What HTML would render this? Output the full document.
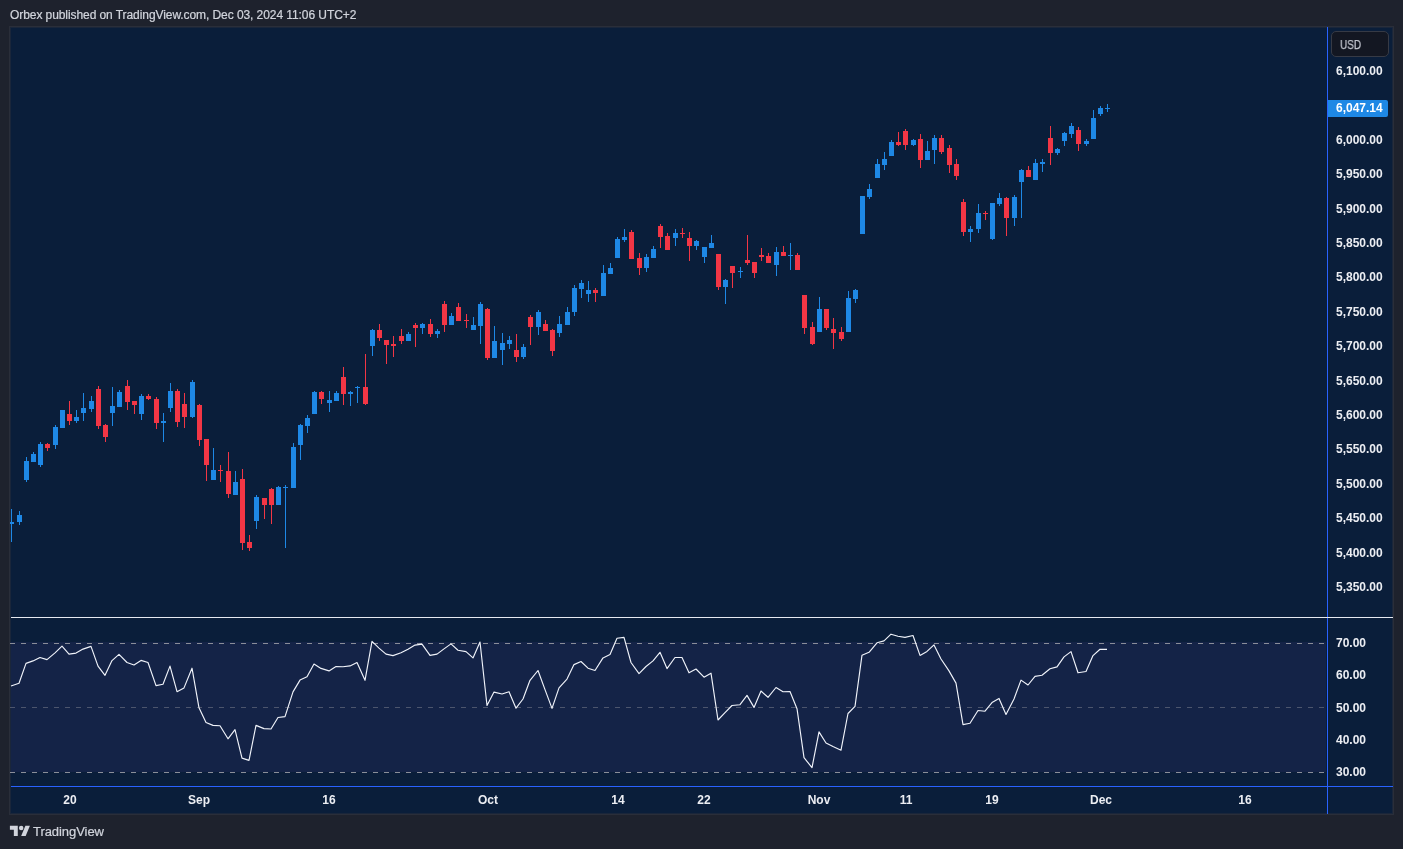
<!DOCTYPE html>
<html lang="en"><head><meta charset="utf-8"><title>Orbex published on TradingView.com</title>
<style>
html,body{margin:0;padding:0}
body{width:1403px;height:849px;overflow:hidden;background:#1e222d;position:relative;font-family:"Liberation Sans",sans-serif;}
.hdr{position:absolute;left:10px;top:7px;font-size:12px;line-height:16px;color:#d1d4dc;white-space:nowrap;letter-spacing:-0.075px}
.frame{position:absolute;left:9px;top:26px;width:1383px;height:787px;border:1px solid #2a2e39;background:#0a1e3a;}
.frame2{position:absolute;left:10px;top:27px;width:1381px;height:785px;border:1px solid #1a263a;}
svg{position:absolute;left:0;top:0}
.hdr,.pl,.tl,.usd span,.cur span,.logo{will-change:transform}
.hdr,.logo{-webkit-text-stroke:0.22px #d1d4dc}
.usd span{-webkit-text-stroke:0.25px #c1c4cd}
.pl{position:absolute;left:1336px;font-size:12px;line-height:16px;font-weight:bold;color:#eceef3;white-space:nowrap}
.tl{position:absolute;top:792px;width:60px;text-align:center;font-size:12px;line-height:16px;font-weight:bold;color:#eceef3;white-space:nowrap}
.usd{position:absolute;left:1331px;top:31px;width:56px;height:24px;border:1px solid #363a45;border-radius:5px;background:#131722;color:#c1c4cd;font-size:12px;line-height:24px;box-sizing:content-box}
.usd span{position:absolute;left:8px;top:1px;transform:scaleX(0.83);transform-origin:0 50%}
.cur{position:absolute;left:1328px;top:100px;width:60px;height:17px;background:#1e88e5;border-radius:0 2px 2px 0;color:#fff;font-size:12px;font-weight:bold;line-height:17px;}
.cur span{position:absolute;left:8px;top:0}
.logo{position:absolute;left:33px;top:824px;font-size:13px;line-height:16px;color:#d1d4dc;white-space:nowrap;letter-spacing:-0.06px}
</style></head><body>
<div class="hdr">Orbex published on TradingView.com, Dec 03, 2024 11:06 UTC+2</div>
<div class="frame"></div><div class="frame2"></div>
<svg width="1403" height="849" viewBox="0 0 1403 849" shape-rendering="crispEdges">
<defs><clipPath id="cp"><rect x="10" y="28" width="1317" height="760"/></clipPath></defs>
<rect x="11" y="642" width="1315" height="130" fill="#142347"/>
<g clip-path="url(#cp)">
<path fill="#1e88e5" d="M11 509h1v33h-1zM9 522h5v2h-5zM19 511h1v14h-1zM17 515h5v7h-5zM26 457h1v25h-1zM24 461h5v19h-5zM33 452h1v10h-1zM31 454h5v8h-5zM40 442h1v25h-1zM38 444h5v21h-5zM55 425h1v24h-1zM53 427h5v18h-5zM62 410h1v18h-1zM60 410h5v18h-5zM76 410h1v13h-1zM74 417h5v4h-5zM83 393h1v28h-1zM81 408h5v5h-5zM91 396h1v16h-1zM89 401h5v8h-5zM112 387h1v39h-1zM110 406h5v7h-5zM119 390h1v17h-1zM117 392h5v15h-5zM141 394h1v26h-1zM139 396h5v18h-5zM163 413h1v29h-1zM161 421h5v2h-5zM170 383h1v29h-1zM168 391h5v17h-5zM192 380h1v38h-1zM190 382h5v35h-5zM213 448h1v32h-1zM211 470h5v10h-5zM235 471h1v24h-1zM233 482h5v13h-5zM256 495h1v34h-1zM254 497h5v24h-5zM278 486h1v19h-1zM276 487h5v18h-5zM285 485h1v63h-1zM283 487h5v1h-5zM293 443h1v45h-1zM291 447h5v41h-5zM300 424h1v36h-1zM298 425h5v20h-5zM307 415h1v18h-1zM305 418h5v8h-5zM314 391h1v23h-1zM312 392h5v22h-5zM329 391h1v21h-1zM327 400h5v3h-5zM336 391h1v10h-1zM334 393h5v8h-5zM350 391h1v15h-1zM348 392h5v2h-5zM357 386h1v17h-1zM355 387h5v1h-5zM372 329h1v27h-1zM370 330h5v16h-5zM408 332h1v9h-1zM406 334h5v7h-5zM422 323h1v11h-1zM420 324h5v4h-5zM437 329h1v9h-1zM435 331h5v3h-5zM451 313h1v12h-1zM449 316h5v9h-5zM473 317h1v13h-1zM471 325h5v5h-5zM480 302h1v42h-1zM478 304h5v22h-5zM494 326h1v32h-1zM492 341h5v17h-5zM502 333h1v32h-1zM500 343h5v7h-5zM509 336h1v13h-1zM507 340h5v4h-5zM523 344h1v15h-1zM521 347h5v10h-5zM538 310h1v25h-1zM536 312h5v15h-5zM559 316h1v21h-1zM557 324h5v9h-5zM567 307h1v18h-1zM565 312h5v13h-5zM574 285h1v31h-1zM572 288h5v24h-5zM581 280h1v18h-1zM579 283h5v6h-5zM588 281h1v21h-1zM586 290h5v4h-5zM603 265h1v31h-1zM601 273h5v23h-5zM610 263h1v11h-1zM608 268h5v6h-5zM617 237h1v21h-1zM615 239h5v19h-5zM624 229h1v13h-1zM622 237h5v3h-5zM646 254h1v18h-1zM644 257h5v11h-5zM653 246h1v12h-1zM651 249h5v9h-5zM675 229h1v17h-1zM673 233h5v5h-5zM696 240h1v10h-1zM694 241h5v5h-5zM704 247h1v16h-1zM702 247h5v10h-5zM711 235h1v13h-1zM709 243h5v5h-5zM725 279h1v25h-1zM723 280h5v7h-5zM740 267h1v11h-1zM738 271h5v1h-5zM776 247h1v29h-1zM774 252h5v13h-5zM790 243h1v27h-1zM788 255h5v1h-5zM819 297h1v35h-1zM817 309h5v23h-5zM848 291h1v41h-1zM846 298h5v34h-5zM855 289h1v14h-1zM853 290h5v9h-5zM862 196h1v38h-1zM860 196h5v38h-5zM869 184h1v15h-1zM867 189h5v8h-5zM877 159h1v19h-1zM875 164h5v14h-5zM884 152h1v18h-1zM882 159h5v6h-5zM891 140h1v16h-1zM889 142h5v14h-5zM913 139h1v7h-1zM911 140h5v5h-5zM927 141h1v19h-1zM925 151h5v9h-5zM934 135h1v29h-1zM932 138h5v12h-5zM970 226h1v16h-1zM968 229h5v3h-5zM978 204h1v29h-1zM976 213h5v16h-5zM992 203h1v37h-1zM990 203h5v36h-5zM999 193h1v13h-1zM997 198h5v6h-5zM1014 195h1v31h-1zM1012 197h5v21h-5zM1021 169h1v49h-1zM1019 170h5v12h-5zM1035 159h1v21h-1zM1033 163h5v17h-5zM1042 159h1v13h-1zM1040 162h5v2h-5zM1057 148h1v7h-1zM1055 149h5v4h-5zM1064 132h1v14h-1zM1062 133h5v8h-5zM1071 123h1v15h-1zM1069 126h5v8h-5zM1086 139h1v7h-1zM1084 141h5v3h-5zM1093 110h1v29h-1zM1091 118h5v21h-5zM1100 106h1v10h-1zM1098 108h5v6h-5zM1107 104h1v8h-1zM1105 108h5v1h-5z"/>
<path fill="#f23645" d="M47 443h1v8h-1zM45 444h5v4h-5zM69 401h1v24h-1zM67 414h5v7h-5zM98 386h1v43h-1zM96 389h5v37h-5zM105 424h1v18h-1zM103 425h5v12h-5zM127 380h1v30h-1zM125 386h5v16h-5zM134 401h1v13h-1zM132 401h5v4h-5zM148 394h1v6h-1zM146 396h5v3h-5zM156 397h1v32h-1zM154 399h5v24h-5zM177 389h1v38h-1zM175 391h5v31h-5zM184 393h1v35h-1zM182 404h5v13h-5zM199 404h1v42h-1zM197 405h5v35h-5zM206 439h1v42h-1zM204 439h5v26h-5zM220 465h1v17h-1zM218 470h5v1h-5zM228 452h1v46h-1zM226 471h5v23h-5zM242 469h1v81h-1zM240 479h5v64h-5zM249 535h1v16h-1zM247 542h5v6h-5zM264 498h1v21h-1zM262 498h5v7h-5zM271 488h1v36h-1zM269 489h5v16h-5zM321 391h1v13h-1zM319 392h5v7h-5zM343 367h1v38h-1zM341 377h5v17h-5zM365 354h1v51h-1zM363 387h5v17h-5zM379 324h1v17h-1zM377 330h5v8h-5zM386 340h1v24h-1zM384 340h5v5h-5zM393 336h1v21h-1zM391 344h5v2h-5zM401 329h1v15h-1zM399 336h5v5h-5zM415 323h1v24h-1zM413 325h5v3h-5zM430 319h1v18h-1zM428 324h5v10h-5zM444 301h1v31h-1zM442 304h5v21h-5zM458 303h1v18h-1zM456 307h5v14h-5zM466 314h1v14h-1zM464 320h5v1h-5zM487 308h1v52h-1zM485 309h5v49h-5zM516 334h1v28h-1zM514 350h5v7h-5zM530 315h1v30h-1zM528 317h5v10h-5zM545 320h1v11h-1zM543 324h5v7h-5zM552 329h1v27h-1zM550 330h5v21h-5zM595 288h1v14h-1zM593 290h5v3h-5zM631 230h1v29h-1zM629 232h5v27h-5zM639 253h1v22h-1zM637 258h5v10h-5zM660 224h1v24h-1zM658 226h5v11h-5zM667 233h1v17h-1zM665 236h5v14h-5zM682 228h1v10h-1zM680 233h5v1h-5zM689 232h1v29h-1zM687 238h5v8h-5zM718 254h1v36h-1zM716 254h5v33h-5zM732 266h1v22h-1zM730 266h5v7h-5zM747 235h1v30h-1zM745 260h5v3h-5zM754 262h1v16h-1zM752 262h5v11h-5zM761 248h1v13h-1zM759 255h5v2h-5zM768 253h1v10h-1zM766 256h5v7h-5zM783 246h1v10h-1zM781 252h5v4h-5zM797 253h1v17h-1zM795 255h5v15h-5zM804 295h1v39h-1zM802 295h5v33h-5zM812 322h1v23h-1zM810 327h5v17h-5zM826 309h1v21h-1zM824 309h5v19h-5zM833 318h1v31h-1zM831 329h5v4h-5zM841 327h1v14h-1zM839 332h5v7h-5zM898 132h1v14h-1zM896 142h5v3h-5zM905 129h1v21h-1zM903 131h5v14h-5zM920 134h1v34h-1zM918 139h5v21h-5zM941 135h1v19h-1zM939 138h5v14h-5zM949 145h1v28h-1zM947 148h5v17h-5zM956 159h1v21h-1zM954 164h5v12h-5zM963 199h1v37h-1zM961 202h5v30h-5zM985 211h1v9h-1zM983 213h5v1h-5zM1006 197h1v39h-1zM1004 198h5v20h-5zM1028 166h1v11h-1zM1026 170h5v7h-5zM1050 126h1v39h-1zM1048 138h5v15h-5zM1078 127h1v24h-1zM1076 130h5v14h-5z"/>
</g>
<g stroke-width="1" fill="none">
<path d="M10 643.5H1327" stroke="#8a8e99" stroke-dasharray="5 6"/>
<path d="M10 707.5H1327" stroke="#4c556d" stroke-dasharray="5 6"/>
<path d="M10 772.5H1327" stroke="#8a8e99" stroke-dasharray="5 6"/>
</g>
<g clip-path="url(#cp)"><polyline points="11,686.0 19,683.3 26,663.4 33,660.9 40,657.5 47,659.6 55,652.9 62,646.2 69,654.1 76,653.1 83,649.1 91,646.4 98,666.1 105,675.3 112,660.6 119,654.4 127,662.5 134,665.0 141,660.4 148,662.5 156,685.6 163,684.3 170,666.1 177,691.7 184,687.9 192,668.2 199,707.8 206,722.5 213,725.4 220,725.8 228,738.8 235,729.6 242,758.1 249,760.4 256,725.4 264,728.6 271,729.0 278,717.5 285,716.6 293,691.9 300,680.1 307,676.8 314,664.0 321,668.4 329,670.9 336,666.5 343,666.7 350,665.9 357,662.5 365,680.3 372,641.4 379,648.1 386,654.1 393,655.6 401,652.7 408,649.3 415,645.1 422,644.1 430,655.4 437,654.1 444,648.9 451,643.9 458,650.2 466,651.6 473,657.9 480,642.0 487,705.5 494,692.1 502,694.0 509,691.7 516,708.2 523,699.0 530,680.3 538,670.5 545,689.6 552,708.4 559,687.9 567,679.1 574,664.6 581,661.5 588,668.2 595,670.5 603,657.9 610,654.6 617,638.2 624,637.4 631,662.5 639,673.6 646,666.5 653,660.9 660,652.3 667,668.6 675,657.5 682,657.5 689,672.8 696,669.0 704,677.2 711,673.2 718,720.0 725,712.6 732,705.5 740,704.7 747,695.4 754,707.4 761,691.0 768,697.3 776,687.5 783,691.7 790,691.5 797,708.7 804,757.7 812,767.6 819,731.9 826,743.0 833,746.6 841,750.2 848,713.5 855,706.3 862,655.2 869,652.3 877,642.8 884,640.9 891,634.2 898,636.3 905,637.4 913,635.5 920,655.4 927,651.4 934,644.9 941,659.0 949,670.9 956,683.1 963,724.6 970,723.3 978,710.5 985,711.2 992,702.6 999,698.4 1006,714.5 1014,699.0 1021,680.1 1028,685.0 1035,676.4 1042,675.3 1050,668.8 1057,666.9 1064,656.9 1071,651.6 1078,672.8 1086,671.5 1093,655.6 1100,649.3 1107,649.3" fill="none" stroke="#f0f3fa" stroke-width="1.15" shape-rendering="geometricPrecision" stroke-linejoin="round"/></g>
<rect x="11" y="786" width="1382" height="1" fill="#2962ff"/>
<rect x="1327" y="27" width="1" height="787" fill="#2962ff"/>
<rect x="11" y="617" width="1382" height="1" fill="#e6e9f0"/>
<g fill="#d1d4dc" shape-rendering="geometricPrecision" transform="translate(9.9 823.55) scale(0.5634)"><path d="M14 22H7V11H0V4h14v18z"/><circle cx="20" cy="8" r="4"/><path d="M28 22h-8l7.5-18h8L28 22z"/></g>
</svg>
<div class="usd"><span>USD</span></div>
<div class="pl" style="top:63px">6,100.00</div>
<div class="pl" style="top:132px">6,000.00</div>
<div class="pl" style="top:166px">5,950.00</div>
<div class="pl" style="top:201px">5,900.00</div>
<div class="pl" style="top:235px">5,850.00</div>
<div class="pl" style="top:269px">5,800.00</div>
<div class="pl" style="top:304px">5,750.00</div>
<div class="pl" style="top:338px">5,700.00</div>
<div class="pl" style="top:373px">5,650.00</div>
<div class="pl" style="top:407px">5,600.00</div>
<div class="pl" style="top:441px">5,550.00</div>
<div class="pl" style="top:476px">5,500.00</div>
<div class="pl" style="top:510px">5,450.00</div>
<div class="pl" style="top:545px">5,400.00</div>
<div class="pl" style="top:579px">5,350.00</div>
<div class="cur"><span>6,047.14</span></div>
<div class="pl" style="top:635px">70.00</div>
<div class="pl" style="top:667px">60.00</div>
<div class="pl" style="top:700px">50.00</div>
<div class="pl" style="top:732px">40.00</div>
<div class="pl" style="top:764px">30.00</div>
<div class="tl" style="left:39.5px">20</div>
<div class="tl" style="left:169.3px">Sep</div>
<div class="tl" style="left:299.1px">16</div>
<div class="tl" style="left:457.7px">Oct</div>
<div class="tl" style="left:587.5px">14</div>
<div class="tl" style="left:674.0px">22</div>
<div class="tl" style="left:789.4px">Nov</div>
<div class="tl" style="left:875.9px">11</div>
<div class="tl" style="left:962.4px">19</div>
<div class="tl" style="left:1070.6px">Dec</div>
<div class="tl" style="left:1214.8px">16</div>
<div class="logo">TradingView</div>
</body></html>
